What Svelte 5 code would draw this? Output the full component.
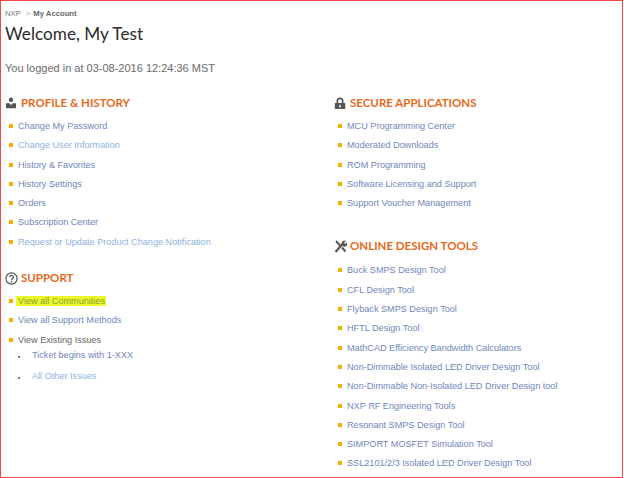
<script>
  const profile = [
    { label: 'Change My Password', kind: 'visited' },
    { label: 'Change User Information', kind: 'link' },
    { label: 'History & Favorites', kind: 'visited' },
    { label: 'History Settings', kind: 'visited' },
    { label: 'Orders', kind: 'visited' },
    { label: 'Subscription Center', kind: 'visited' },
    { label: 'Request or Update Product Change Notification', kind: 'link' }
  ];
  const secure = [
    'MCU Programming Center',
    'Moderated Downloads',
    'ROM Programming',
    'Software Licensing and Support',
    'Support Voucher Management'
  ];
  const tools = [
    'Buck SMPS Design Tool',
    'CFL Design Tool',
    'Flyback SMPS Design Tool',
    'HFTL Design Tool',
    'MathCAD Efficiency Bandwidth Calculators',
    'Non-Dimmable Isolated LED Driver Design Tool',
    'Non-Dimmable Non-Isolated LED Driver Design tool',
    'NXP RF Engineering Tools',
    'Resonant SMPS Design Tool',
    'SIMPORT MOSFET Simulation Tool',
    'SSL2101/2/3 Isolated LED Driver Design Tool'
  ];
</script>

<div class="frame">
  <div class="crumbs"><span>NXP</span><span class="sep">&gt;</span><b>My Account</b></div>
  <h1>Welcome, My Test</h1>
  <p class="login">You logged in at 03-08-2016 12:24:36 MST</p>

  <div class="columns">
    <div class="col">
      <section>
        <h2>
          <svg width="12" height="12" viewBox="0 0 12 12"><rect x="4" y="0.500" width="4" height="4.500" rx="1.800" fill="#555" /><path d="M1 6.200h3.500l1.500 2 1.500-2h3.500v5h-10z" fill="#555" /></svg>
          PROFILE &amp; HISTORY
        </h2>
        <ul>
          {#each profile as item}
            <li class={item.kind}>{item.label}</li>
          {/each}
        </ul>
      </section>
      <section class="support">
        <h2>
          <svg width="13" height="13" viewBox="0 0 13 13"><circle cx="6.5" cy="6.5" r="5.600" fill="none" stroke="#555" stroke-width="1.200" /><path d="M4.600 5a2 1.800 0 1 1 2.900 1.700c-.7.4-1 .7-1 1.500" fill="none" stroke="#555" stroke-width="1.300" /><rect x="5.800" y="9" width="1.400" height="1.400" fill="#555" /></svg>
          SUPPORT
        </h2>
        <ul>
          <li class="visited"><span class="mark">View all Communities</span></li>
          <li class="visited">View all Support Methods</li>
          <li class="plain">View Existing Issues</li>
        </ul>
        <ul class="sub">
          <li class="visited">Ticket begins with 1-XXX</li>
          <li class="link">All Other Issues</li>
        </ul>
      </section>
    </div>

    <div class="col">
      <section>
        <h2>
          <svg width="12" height="13" viewBox="0 0 12 13"><path d="M2.500 6V4a3.500 3.500 0 0 1 7 0v2h-1.700V4a1.800 1.800 0 0 0-3.600 0v2z" fill="#555" /><rect x="0.800" y="6" width="10.400" height="6" fill="#555" /><rect x="5.300" y="7.800" width="1.400" height="2.600" fill="#fff" /></svg>
          SECURE APPLICATIONS
        </h2>
        <ul>
          {#each secure as label}
            <li class="visited">{label}</li>
          {/each}
        </ul>
      </section>
      <section class="tools">
        <h2>
          <svg width="13" height="13" viewBox="0 0 13 13"><path d="M1.500 12l7-8" stroke="#555" stroke-width="2.200" /><path d="M7.500 3.500a3 3 0 0 1 4.500-2.500l-2 1.800 1.200 1.200 1.800-1.800a3 3 0 0 1-4.500 3.800z" fill="#555" /><path d="M2 1l4 4.500M8 7.500l3.500 4" stroke="#555" stroke-width="2" /></svg>
          ONLINE DESIGN TOOLS
        </h2>
        <ul>
          {#each tools as label}
            <li class="visited">{label}</li>
          {/each}
        </ul>
      </section>
    </div>
  </div>
</div>

<style>
  :global(body) {
    background: #fff;
  }

  .frame {
    box-sizing: border-box;
    width: 623px;
    height: 478px;
    overflow: hidden;
    border: 1px solid #f04848;
    padding: 7px 0 0 4px;
    font-family: "Liberation Sans", Arial, sans-serif;
    color: #666;
  }

  .crumbs {
    display: flex;
    gap: 3px;
    font-size: 7.7px;
    line-height: 12px;
    color: #777;
  }

  .crumbs b {
    color: #666;
  }

  .sep {
    margin-left: 2px;
    color: #aaa;
  }

  h1 {
    margin: 2px 0 0;
    font: 400 17.2px/24px Lato, sans-serif;
    color: #2b2b2b;
  }

  .login {
    margin: 15px 0 0;
    font-size: 11px;
    line-height: 14px;
    color: #6a6a6a;
  }

  .columns {
    display: grid;
    grid-template-columns: 329px 1fr;
    margin-top: 20px;
  }

  h2 {
    display: flex;
    align-items: center;
    gap: 4px;
    margin: 0;
    font: 700 11.5px/16px Lato, sans-serif;
    color: #e8681a;
  }

  .support h2,
  .tools h2 {
    gap: 3px;
  }

  ul {
    list-style: none;
    margin: 8px 0 0;
    padding: 0 0 0 5px;
  }

  li {
    position: relative;
    padding-left: 8px;
    height: 19.3px;
    font-size: 9.15px;
    line-height: 14px;
  }

  li::before {
    content: "";
    position: absolute;
    left: -1px;
    top: 5px;
    width: 4px;
    height: 4px;
    background: #f8b000;
  }

  .visited {
    color: #6f86bb;
  }

  .link {
    color: #8cb2dd;
  }

  .plain {
    color: #666;
  }

  .mark {
    background: #ecf82c;
    color: #8aa030;
    padding: 0 1px 0 2px;
    margin-left: -2px;
  }

  .support {
    margin-top: 16px;
  }

  .tools {
    margin-top: 23px;
  }

  .tools ul {
    margin-top: 9px;
  }

  ul.sub {
    margin-top: -4px;
    padding-left: 12px;
  }

  .sub li {
    padding-left: 15px;
    height: 21px;
  }

  .sub li::before {
    left: 1px;
    top: 8px;
    width: 2px;
    height: 2px;
    background: #777;
  }
</style>
